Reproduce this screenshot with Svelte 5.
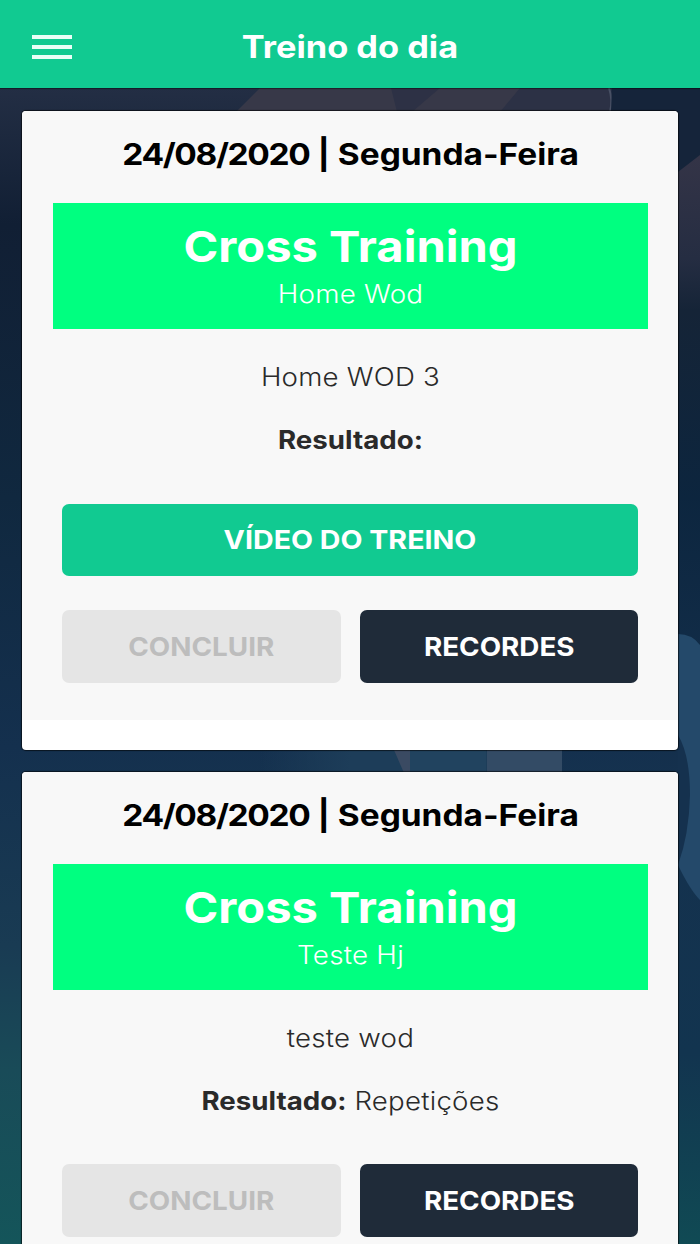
<script>
  let workouts = [
    {
      date: '24/08/2020',
      weekday: 'Segunda-Feira',
      category: 'Cross Training',
      name: 'Home Wod',
      description: 'Home WOD 3',
      result: '',
      video: true
    },
    {
      date: '24/08/2020',
      weekday: 'Segunda-Feira',
      category: 'Cross Training',
      name: 'Teste Hj',
      description: 'teste wod',
      result: 'Repetições',
      video: false
    }
  ];

  let menuOpen = false;
</script>

<div class="app">
  <svg class="backdrop" viewBox="0 0 700 1244" aria-hidden="true">
    <defs>
      <linearGradient id="night" x1="0" y1="0" x2="0" y2="1">
        <stop offset="0.07" stop-color="#232e44" />
        <stop offset="0.18" stop-color="#111f34" />
        <stop offset="0.4" stop-color="#10283f" />
        <stop offset="0.6" stop-color="#14304e" />
        <stop offset="0.76" stop-color="#193b53" />
        <stop offset="0.86" stop-color="#194b58" />
        <stop offset="1" stop-color="#14555a" />
      </linearGradient>
      <linearGradient id="shade" x1="0" y1="0" x2="0" y2="1">
        <stop offset="0" stop-color="#343447" />
        <stop offset="0.3" stop-color="#252d42" />
        <stop offset="0.45" stop-color="#152437" />
        <stop offset="1" stop-color="#0c253e" />
      </linearGradient>
      <linearGradient id="right" x1="0" y1="0" x2="0" y2="1">
        <stop offset="0" stop-color="#0c253e" />
        <stop offset="0.4" stop-color="#15314e" />
        <stop offset="0.75" stop-color="#12344f" />
        <stop offset="1" stop-color="#104a54" />
      </linearGradient>
      <linearGradient id="floor" x1="0" y1="0" x2="1" y2="0">
        <stop offset="0" stop-color="#1d3d59" stop-opacity="0" />
        <stop offset="0.3" stop-color="#1d3d59" />
      </linearGradient>
    </defs>
    <rect width="700" height="1244" fill="url(#night)" />
    <rect x="660" y="480" width="40" height="764" fill="url(#right)" />
    <path d="M260 88H610Q613 100 610 112H236Z" fill="#373848" />
    <path d="M391 88H440L412 112H397Z" fill="#2d3145" />
    <path d="M520 88H610Q613 100 610 112H500Z" fill="#2c3145" />
    <path d="M609 88Q613 100 610 112" fill="none" stroke="#485064" stroke-width="2" />
    <path d="M612 88H700V160L678 174V112H611Z" fill="#15243a" />
    <path d="M678 172L700 155V500H678Z" fill="url(#shade)" />
    <path d="M678 634Q692 634 700 645V900Q690 890 678 865Z" fill="#24496a" />
    <path d="M678 735Q690 755 690 795Q689 835 678 865Z" fill="#15314e" />
    <path d="M260 750H562V773H260Z" fill="url(#floor)" />
    <path d="M394 750H410V773H404Z" fill="#3a4a62" />
    <path d="M410 750H486V773H410Z" fill="#21435f" />
    <path d="M487 750H562V773H487Z" fill="#334b65" />
  </svg>

  <header class="topbar">
    <button class="menu" aria-label="Menu" on:click={() => (menuOpen = !menuOpen)}>
      <span></span>
      <span></span>
      <span></span>
    </button>
    <h1>Treino do dia</h1>
  </header>

  <main class="list">
    {#each workouts as workout}
      <article class="card">
        <div class="card-body">
          <h2><span class="date">{workout.date}</span> | {workout.weekday}</h2>
          <div class="band">
            <h3>{workout.category}</h3>
            <p>{workout.name}</p>
          </div>
          <p class="description">{workout.description}</p>
          <p class="result"><strong>Resultado:</strong> {workout.result}</p>
          <div class="actions">
            {#if workout.video}
              <button class="video"><span>VÍDEO DO TREINO</span></button>
            {/if}
            <div class="row">
              <button class="finish" disabled><span>CONCLUIR</span></button>
              <button class="records"><span>RECORDES</span></button>
            </div>
          </div>
        </div>
      </article>
    {/each}
  </main>
</div>

<style>
  :global(body) {
    margin: 0;
    background-color: #14304e;
  }

  .app {
    position: relative;
    height: 1244px;
    overflow: hidden;
    font-family: Inter, 'Open Sans', sans-serif;
    text-align: center;
  }

  .backdrop {
    position: absolute;
    top: 0;
    left: 0;
    width: 700px;
    height: 1244px;
  }

  h1, h2, h3, p {
    margin: 0;
  }

  .topbar {
    position: relative;
    display: grid;
    grid-template-columns: 72px 1fr 72px;
    align-items: center;
    height: 88px;
    background-color: #11ca91;
    box-shadow: 0 1px 1px rgba(0, 0, 0, 0.4);
  }

  .menu {
    display: flex;
    flex-direction: column;
    gap: 6px;
    width: 40px;
    margin-left: 32px;
    padding: 5px 0 0;
    border: none;
    background: none;
    cursor: pointer;
  }

  .menu span {
    height: 4px;
    background-color: #eafff7;
  }

  /* the headings and labels are set slightly extended */
  h1 {
    padding-top: 6px;
    font-size: 31px;
    line-height: 38px;
    font-weight: 700;
    color: #fff;
    transform: scaleX(1.108);
  }

  .list {
    position: relative;
    display: flex;
    flex-direction: column;
    gap: 22px;
    padding: 23px 22px 0;
  }

  .card {
    padding-bottom: 30px;
    border-radius: 4px;
    background-color: #fff;
    box-shadow: 0 0 1px 1px rgba(0, 0, 0, 0.6);
  }

  .card-body {
    padding: 24px 30px 37px 31px;
    border-radius: 4px 4px 0 0;
    background-color: #f8f8f8;
  }

  h2 {
    height: 68px;
    font-size: 30px;
    line-height: 38px;
    font-weight: 700;
    color: #000;
    transform: scaleX(1.115);
  }

  .date {
    letter-spacing: -1.2px;
  }

  .band {
    box-sizing: border-box;
    height: 126px;
    padding-top: 16px;
    background-color: #00ff80;
    color: #fff;
  }

  h3 {
    font-size: 43px;
    line-height: 54px;
    font-weight: 700;
    transform: scaleX(1.095);
  }

  .band p {
    font-size: 25.5px;
    line-height: 42px;
    font-weight: 300;
    letter-spacing: 0.2px;
    transform: scaleX(1.09);
  }

  .description,
  .result {
    font-size: 25.5px;
    line-height: 32px;
    font-weight: 300;
    letter-spacing: 0.2px;
    color: #2a2a2a;
    transform: scaleX(1.085);
  }

  .description {
    padding-top: 32px;
  }

  .result {
    padding-top: 31px;
  }

  .result strong {
    font-weight: 700;
    letter-spacing: 0;
  }

  .actions {
    display: flex;
    flex-direction: column;
    gap: 34px;
    padding: 47.5px 10px 0 9px;
  }

  .row {
    display: flex;
    gap: 19px;
  }

  .actions button {
    flex: 1;
    height: 72.5px;
    padding: 0;
    border: none;
    border-radius: 7px;
    font-family: inherit;
    font-size: 26px;
    font-weight: 700;
    color: #fff;
    cursor: pointer;
  }

  .actions button span {
    display: block;
    transform: scaleX(1.07);
  }

  .actions .video {
    flex: none;
    background-color: #11ca91;
  }

  .actions .video span {
    transform: scaleX(1.1);
  }

  .actions .finish {
    background-color: #e5e5e5;
    color: #bdbdbd;
  }

  .actions .records {
    background-color: #1f2b39;
  }
</style>
